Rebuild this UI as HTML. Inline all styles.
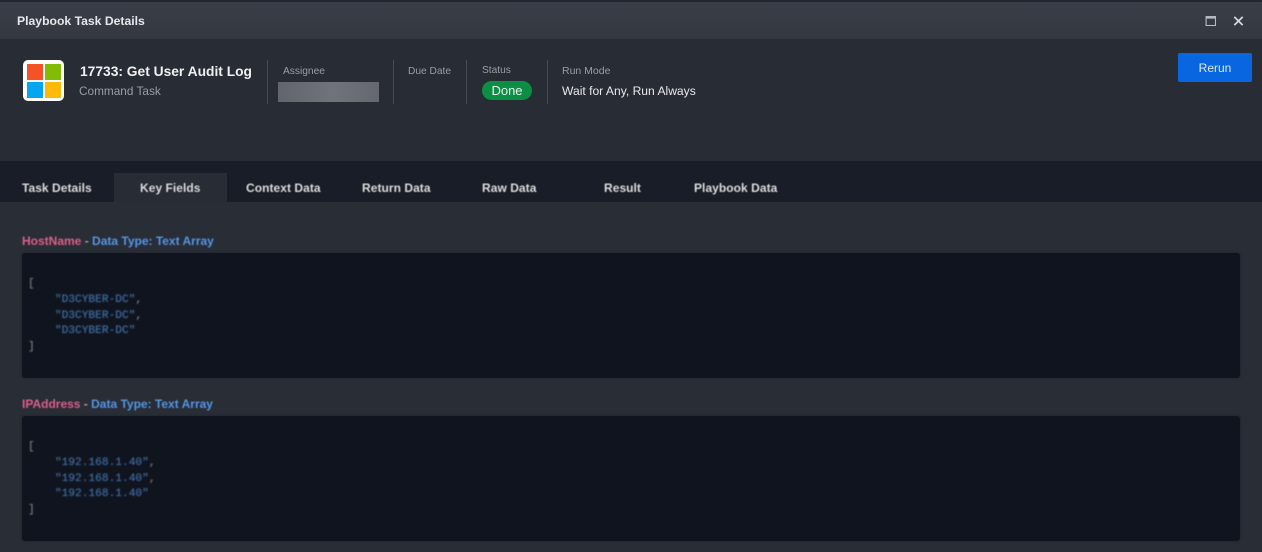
<!DOCTYPE html>
<html><head><meta charset="utf-8">
<style>
html,body{margin:0;padding:0;background:#292d36;}
body{width:1262px;height:552px;position:relative;overflow:hidden;font-family:"Liberation Sans",sans-serif;}
.a{position:absolute;white-space:nowrap;}
.sep{position:absolute;width:1px;background:#464b55;}
.lbl{position:absolute;white-space:nowrap;font-size:10.2px;color:#9a9da4;line-height:14px;filter:blur(.3px);}
.tab{position:absolute;top:181px;white-space:nowrap;font-size:12px;letter-spacing:.05px;font-weight:bold;color:#dfe1e4;line-height:14px;filter:blur(.6px);text-shadow:0 0 1px #000;}
.box{position:absolute;left:22px;width:1218px;background:#10141e;border-radius:3px;box-shadow:0 0 2px #1c2029;}
.m{position:absolute;font-family:"Liberation Mono",monospace;font-size:11.2px;line-height:15.75px;white-space:pre;filter:blur(.8px);}
.s{color:#4a7fbf}.b{color:#8f9299}
.h{position:absolute;white-space:nowrap;font-size:12px;font-weight:bold;line-height:14px;filter:blur(.6px);}
</style></head><body>
<div class="a" style="left:0;top:0;width:1262px;height:39px;background:linear-gradient(#3a3e48,#343841);"></div>
<div class="a" style="left:0;top:0;width:1262px;height:2px;background:#23262d;"></div>
<div class="a" style="left:17px;top:14px;font-size:12.2px;font-weight:bold;color:#e6e7ea;line-height:15px;filter:blur(.25px);">Playbook Task Details</div>
<svg class="a" style="left:1205px;top:16px" width="11" height="10" viewBox="0 0 11 10"><rect x="1.1" y=".6" width="9.4" height="8.9" fill="none" stroke="#b9bbc0" stroke-width="1.1"/><rect x="1" y="1" width="9.6" height="1.6" fill="#b9bbc0"/></svg>
<svg class="a" style="left:1233px;top:16px" width="11" height="10" viewBox="0 0 11 10"><path d="M1.3 .9L9.7 9.1M9.7 .9L1.3 9.1" stroke="#d8d9dc" stroke-width="1.7" fill="none"/></svg>

<div class="a" style="left:0;top:39px;width:1262px;height:122px;background:#282c35;"></div>
<div class="a" style="left:23px;top:60px;width:41px;height:41px;background:#fff;border-radius:5px;"></div>
<div class="a" style="left:27px;top:64px;width:16px;height:16px;background:#f35325;"></div>
<div class="a" style="left:45px;top:64px;width:15.5px;height:16px;background:#81bc06;"></div>
<div class="a" style="left:27px;top:82px;width:16px;height:16px;background:#05a6f0;"></div>
<div class="a" style="left:45px;top:82px;width:15.5px;height:16px;background:#ffba08;"></div>
<div class="a" style="left:80px;top:63px;font-size:13.8px;font-weight:bold;color:#eff0f2;line-height:17px;">17733: Get User Audit Log</div>
<div class="a" style="left:79px;top:84px;font-size:11.8px;color:#9a9da4;line-height:14px;">Command Task</div>
<div class="sep" style="left:267px;top:60px;height:44px;"></div>
<div class="lbl" style="left:283px;top:65px;">Assignee</div>
<div class="a" style="left:278px;top:82px;width:101px;height:20px;background:linear-gradient(90deg,#62656c,#70737a 55%,#65686f);"></div>
<div class="sep" style="left:393px;top:60px;height:44px;"></div>
<div class="lbl" style="left:408px;top:65px;">Due Date</div>
<div class="sep" style="left:466px;top:60px;height:44px;"></div>
<div class="lbl" style="left:482px;top:64px;">Status</div>
<div class="a" style="left:482px;top:81px;width:50px;height:19px;background:#0c8f44;border-radius:10px;color:#e8f3ec;font-size:13px;line-height:19px;text-align:center;">Done</div>
<div class="sep" style="left:547px;top:60px;height:44px;"></div>
<div class="lbl" style="left:562px;top:64px;font-size:10.5px;">Run Mode</div>
<div class="a" style="left:562px;top:84px;font-size:12.1px;color:#e8e9eb;line-height:14px;">Wait for Any, Run Always</div>
<div class="a" style="left:1178px;top:53px;width:74px;height:29px;background:#0866e0;border-radius:2px;color:#dfe9f8;font-size:12px;line-height:31px;text-align:center;">Rerun</div>

<div class="a" style="left:0;top:161px;width:1262px;height:41px;background:#191d27;"></div>
<div class="a" style="left:114px;top:173px;width:113px;height:29px;background:#282c35;"></div>
<div class="tab" style="left:22px;">Task Details</div>
<div class="tab" style="left:140px;">Key Fields</div>
<div class="tab" style="left:246px;">Context Data</div>
<div class="tab" style="left:362px;">Return Data</div>
<div class="tab" style="left:482px;">Raw Data</div>
<div class="tab" style="left:604px;">Result</div>
<div class="tab" style="left:694px;">Playbook Data</div>

<div class="h" style="left:22px;top:234px;"><span style="color:#dc5f8a">HostName</span><span style="color:#a2a5ab"> - </span><span style="color:#5596e4">Data Type: Text Array</span></div>
<div class="box" style="top:253px;height:125px;"></div>
<div class="m" style="left:28px;top:277px;"><span class="b">[</span>
    <span class="s">"D3CYBER-DC"</span><span class="b">,</span>
    <span class="s">"D3CYBER-DC"</span><span class="b">,</span>
    <span class="s">"D3CYBER-DC"</span>
<span class="b">]</span></div>

<div class="h" style="left:22px;top:397px;"><span style="color:#dc5f8a">IPAddress</span><span style="color:#a2a5ab"> - </span><span style="color:#5596e4">Data Type: Text Array</span></div>
<div class="box" style="top:416px;height:125px;"></div>
<div class="m" style="left:28px;top:440px;"><span class="b">[</span>
    <span class="s">"192.168.1.40"</span><span class="b">,</span>
    <span class="s">"192.168.1.40"</span><span class="b">,</span>
    <span class="s">"192.168.1.40"</span>
<span class="b">]</span></div>
</body></html>
